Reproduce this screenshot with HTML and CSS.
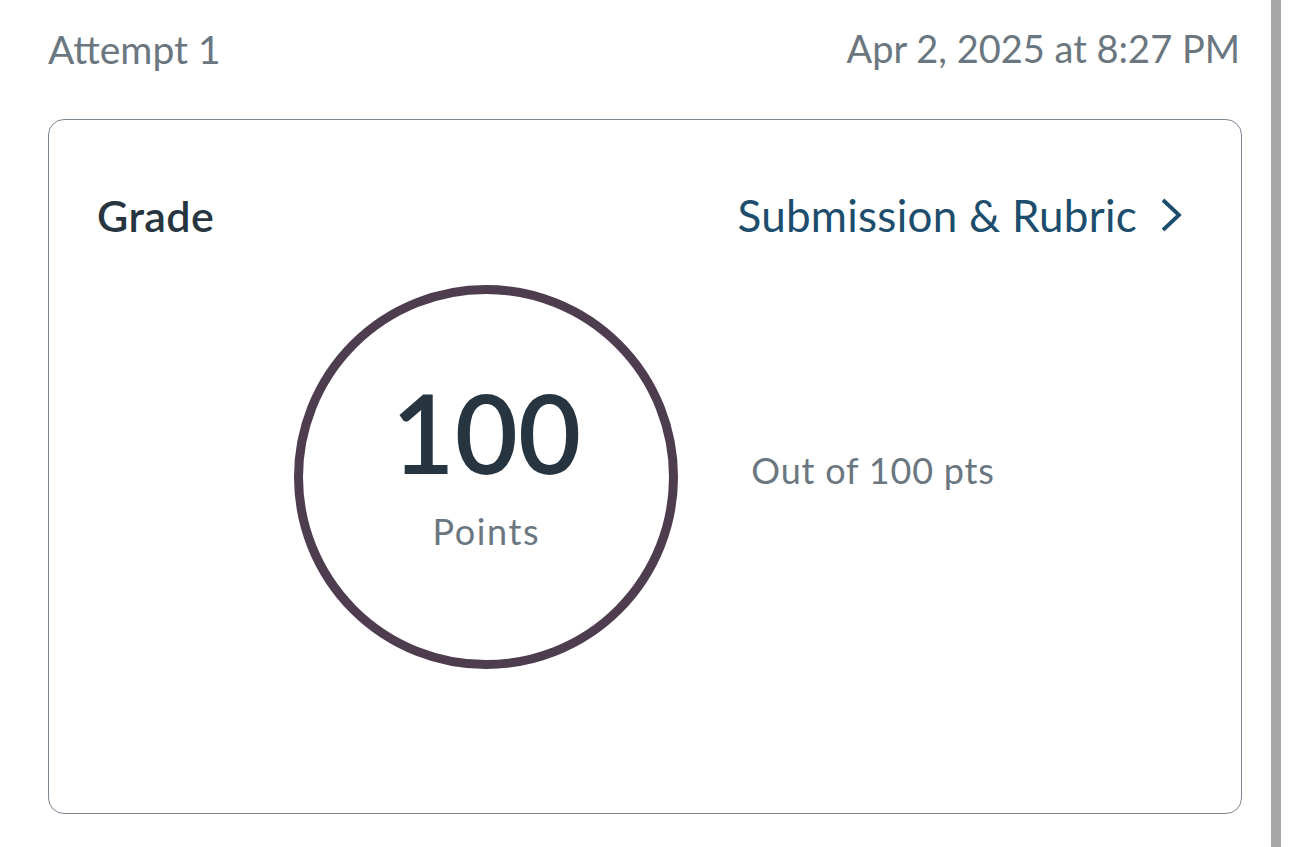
FILE: index.html
```html
<!DOCTYPE html>
<html lang="en">
<head>
<meta charset="utf-8">
<title>Attempt 1</title>
<link rel="stylesheet" href="styles.css">
</head>
<body>
<div class="page">
  <header class="attempt-bar">
    <span class="attempt">Attempt 1</span>
    <span class="date">Apr 2, 2025 at 8:27 PM</span>
  </header>
  <section class="card">
    <div class="card-head">
      <h2 class="grade-title">Grade</h2>
      <a class="sub-link" href="#">Submission &amp; Rubric
        <svg class="chev" width="24" height="36" viewBox="0 0 24 36" aria-hidden="true"><polyline points="4,3 20,18 4,33" fill="none" stroke="#1d4d6c" stroke-width="3.8" stroke-linecap="butt" stroke-linejoin="miter"/></svg>
      </a>
    </div>
    <div class="score-row">
      <div class="ring">
        <span class="score">100</span>
        <span class="score-label">Points</span>
      </div>
      <span class="out-of">Out of 100 pts</span>
    </div>
  </section>
</div>
<div class="scrollbar"></div>
</body>
</html>
```

FILE: styles.css
```css
html, body {
  margin: 0;
  padding: 0;
  background: #ffffff;
}
body {
  font-family: Lato, "Open Sans", sans-serif;
  width: 1290px;
  height: 847px;
  overflow: hidden;
  position: relative;
}
.page {
  display: flex;
  flex-direction: column;
}
.attempt-bar {
  height: 98px;
  display: flex;
  align-items: center;
  justify-content: space-between;
  padding: 0 50px 0 48px;
  color: #6b7780;
  line-height: 1.2;
}
.attempt {
  font-size: 39px;
}
.date {
  font-size: 38px;
}
.card {
  box-sizing: border-box;
  margin: 21px 48px 0 48px;
  height: 695px;
  border: 1.5px solid #7c8792;
  border-radius: 16px;
  padding: 69px 58px 0 48px;
  display: flex;
  flex-direction: column;
}
.card-head {
  display: flex;
  align-items: center;
  justify-content: space-between;
}
.grade-title {
  margin: 0;
  font-size: 43px;
  font-weight: 600;
  letter-spacing: 0.4px;
  line-height: 1.2;
  color: #273540;
}
.sub-link {
  display: flex;
  align-items: center;
  gap: 22px;
  color: #1d4d6c;
  text-decoration: none;
  font-size: 44px;
  letter-spacing: 0.25px;
  line-height: 1.2;
}
.chev {
  display: block;
}
.score-row {
  margin-top: 43px;
  display: flex;
  align-items: center;
  justify-content: center;
  gap: 73px;
  padding-left: 9px;
}
.ring {
  box-sizing: border-box;
  width: 384px;
  height: 384px;
  border: 9px solid #4e3c4f;
  border-radius: 50%;
  display: flex;
  flex-direction: column;
  align-items: center;
  justify-content: center;
  padding-bottom: 23px;
}
.score {
  font-size: 109px;
  font-weight: 600;
  line-height: 1;
  color: #263540;
}
.score-label {
  margin-top: 24px;
  font-size: 36px;
  letter-spacing: 1.6px;
  line-height: 1.2;
  color: #6b7780;
}
.out-of {
  font-size: 36px;
  letter-spacing: 0.8px;
  line-height: 1.2;
  color: #6b7780;
  margin-bottom: 12px;
}
.scrollbar {
  position: absolute;
  top: 0;
  right: 9px;
  width: 10px;
  height: 847px;
  background: #a6a6a6;
}
```
